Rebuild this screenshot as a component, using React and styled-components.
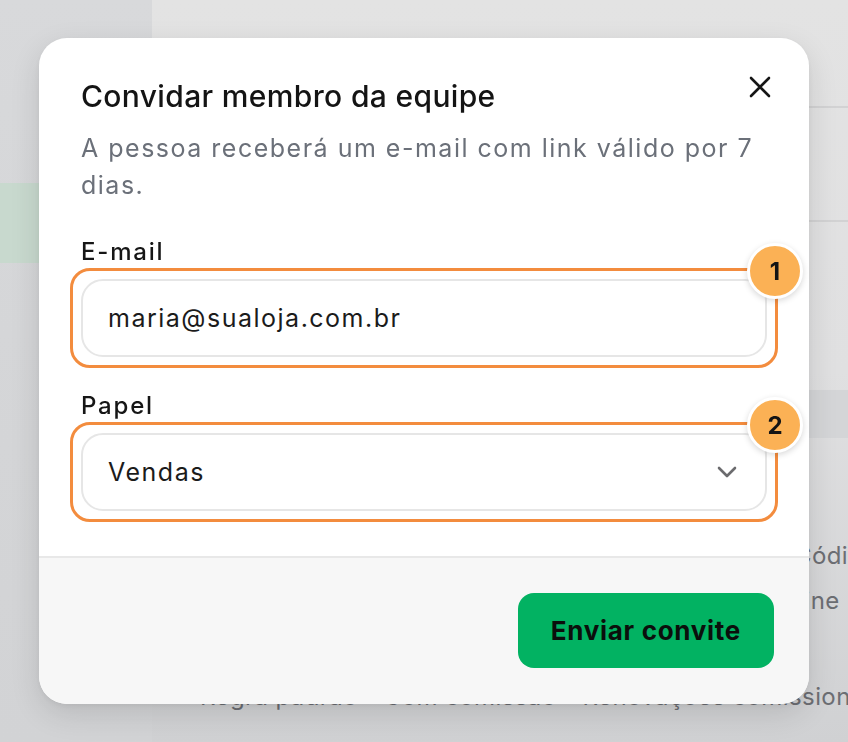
import React from "react";
import styled, { createGlobalStyle } from "styled-components";

const Global = createGlobalStyle`
  html, body { margin: 0; padding: 0; }
  body {
    width: 848px; height: 742px; overflow: hidden;
    font-family: Inter, "Noto Sans", sans-serif;
    -webkit-font-smoothing: antialiased;
  }
  * { box-sizing: border-box; }
`;

const Page = styled.div`
  display: flex;
  width: 848px;
  height: 742px;
  overflow: hidden;
`;

const Sidebar = styled.aside`
  width: 152px;
  flex: none;
  padding-top: 183px;
  background: linear-gradient(180deg, #d8d9db 0%, #d4d5d7 60%, #d2d3d5 100%);
`;

const NavItem = styled.div`
  height: 80px;
  margin-right: 14px;
  border-radius: 0 10px 10px 0;
  background: ${(p) => (p.$active ? "#c8d9ce" : "transparent")};
`;

const Main = styled.main`
  flex: 1;
  display: flex;
  flex-direction: column;
  background: linear-gradient(180deg, #e3e3e3 0%, #e0e0e1 50%, #d0d1d3 100%);
  color: #6c6e73;
  font-size: 24px;
  letter-spacing: 0.4px;
`;

const Block = styled.div`
  height: ${(p) => p.$h}px;
  flex: none;
  border-bottom: ${(p) => (p.$line ? "2px solid #d2d2d3" : "none")};
  background: ${(p) => p.$bg || "transparent"};
`;

const BgRow = styled.div`
  height: ${(p) => p.$h}px;
  flex: none;
  display: flex;
  align-items: center;
  padding-left: ${(p) => p.$pl}px;
  gap: ${(p) => p.$gap || 0}px;
  white-space: nowrap;
  overflow: hidden;
`;

const Backdrop = styled.div`
  position: fixed;
  inset: 0;
  display: flex;
  align-items: center;
  justify-content: center;
`;

const Modal = styled.div`
  width: 770px;
  background: #ffffff;
  border-radius: 28px;
  box-shadow: 0 10px 30px rgba(0, 0, 0, 0.12), 0 2px 6px rgba(0, 0, 0, 0.06);
  display: flex;
  flex-direction: column;
`;

const Body = styled.div`
  position: relative;
  padding: 40px 42px 45px 42px;
  display: flex;
  flex-direction: column;
`;

const Title = styled.h2`
  margin: 0;
  font-size: 30px;
  line-height: 36px;
  font-weight: 500;
  color: #141414;
  letter-spacing: 0.35px;
`;

const Description = styled.p`
  margin: 16px 0 0 0;
  font-size: 25px;
  line-height: 37px;
  color: #6b7079;
  padding-right: 4px;
  letter-spacing: 1.5px;
`;

const CloseButton = styled.button`
  position: absolute;
  top: 34px;
  right: 34px;
  width: 30px;
  height: 30px;
  padding: 0;
  border: 0;
  background: transparent;
  display: flex;
  align-items: center;
  justify-content: center;
  color: #161616;
`;

const Fields = styled.div`
  display: flex;
  flex-direction: column;
  gap: 34px;
  margin-top: 33px;
`;

const Field = styled.div`
  display: flex;
  flex-direction: column;
  gap: 12px;
`;

const Label = styled.label`
  font-size: 24px;
  line-height: 30px;
  font-weight: 500;
  color: #161616;
  letter-spacing: 1.8px;
`;

const Control = styled.div`
  position: relative;
  height: 78px;
  border: 2px solid #e6e6e6;
  border-radius: 22px;
  display: flex;
  align-items: center;
  justify-content: space-between;
  padding: 0 28px 0 25px;
  font-size: 25px;
  letter-spacing: 1.5px;
  color: #1b1b1b;
  background: #fff;
`;

const Highlight = styled.div`
  position: absolute;
  inset: -13px;
  border: 3px solid #f38c3e;
  border-radius: 20px;
  pointer-events: none;
`;

const Badge = styled.div`
  position: absolute;
  top: -38px;
  right: -38px;
  width: 56px;
  height: 56px;
  border-radius: 50%;
  background: #fbb155;
  border: 3px solid #ffffff;
  box-shadow: 0 2px 6px rgba(0, 0, 0, 0.16);
  display: flex;
  align-items: center;
  justify-content: center;
  font-size: 24px;
  letter-spacing: 0;
  font-weight: 700;
  color: #141414;
`;

const Footer = styled.div`
  border-top: 2px solid #e8e8e8;
  background: #f7f7f7;
  border-radius: 0 0 28px 28px;
  padding: 35px 35px 36px;
  display: flex;
  justify-content: flex-end;
`;

const PrimaryButton = styled.button`
  height: 75px;
  padding: 0 33px;
  border: 0;
  border-radius: 16px;
  background: #02b262;
  color: #0b0f0c;
  font-family: Inter, "Noto Sans", sans-serif;
  font-size: 26px;
  letter-spacing: 0.7px;
  font-weight: 700;
`;

const XIcon = () => (
  <svg width="22" height="22" viewBox="0 0 22 22" fill="none">
    <path d="M2 2L20 20M20 2L2 20" stroke="currentColor" strokeWidth="2.6" strokeLinecap="round" />
  </svg>
);

const Chevron = () => (
  <svg width="20" height="12" viewBox="0 0 20 12" fill="none">
    <path d="M2 2L10 10L18 2" stroke="#6b6b6e" strokeWidth="2.6" strokeLinecap="round" strokeLinejoin="round" />
  </svg>
);

export default function App() {
  return (
    <>
      <Global />
      <Page>
        <Sidebar>
          <NavItem $active />
        </Sidebar>
        <Main>
          <Block $h={108} $line />
          <Block $h={114} $line />
          <Block $h={168} />
          <Block $h={48} $bg="#d4d5d7" />
          <Block $h={97} />
          <BgRow $h={40} $pl={642}>Código</BgRow>
          <BgRow $h={50} $pl={613}>Online</BgRow>
          <Block $h={55} />
          <BgRow $h={32} $pl={48} $gap={26}>
            <span>Regra padrão</span>
            <span>Com comissão</span>
            <span>Renovações comissionadas</span>
          </BgRow>
        </Main>
      </Page>
      <Backdrop>
        <Modal role="dialog">
          <Body>
            <Title>Convidar membro da equipe</Title>
            <Description>
              A pessoa receberá um e-mail com link válido por 7 dias.
            </Description>
            <CloseButton aria-label="Fechar">
              <XIcon />
            </CloseButton>
            <Fields>
              <Field>
                <Label>E-mail</Label>
                <Control>
                  maria@sualoja.com.br
                  <Highlight />
                  <Badge>1</Badge>
                </Control>
              </Field>
              <Field>
                <Label>Papel</Label>
                <Control>
                  Vendas
                  <Chevron />
                  <Highlight />
                  <Badge>2</Badge>
                </Control>
              </Field>
            </Fields>
          </Body>
          <Footer>
            <PrimaryButton>Enviar convite</PrimaryButton>
          </Footer>
        </Modal>
      </Backdrop>
    </>
  );
}
